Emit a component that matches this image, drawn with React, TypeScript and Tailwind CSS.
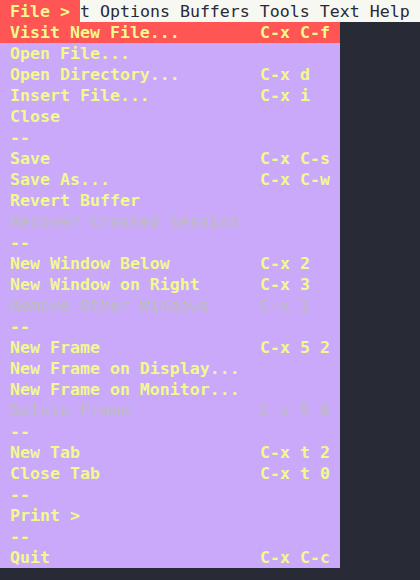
import React from "react";

type Item = { label: string; key?: string; disabled?: boolean; active?: boolean };

const items: Item[] = [
  { label: "Visit New File...", key: "C-x C-f", active: true },
  { label: "Open File..." },
  { label: "Open Directory...", key: "C-x d" },
  { label: "Insert File...", key: "C-x i" },
  { label: "Close" },
  { label: "--" },
  { label: "Save", key: "C-x C-s" },
  { label: "Save As...", key: "C-x C-w" },
  { label: "Revert Buffer" },
  { label: "Recover Crashed Session", disabled: true },
  { label: "--" },
  { label: "New Window Below", key: "C-x 2" },
  { label: "New Window on Right", key: "C-x 3" },
  { label: "Remove Other Windows", key: "C-x 1", disabled: true },
  { label: "--" },
  { label: "New Frame", key: "C-x 5 2" },
  { label: "New Frame on Display..." },
  { label: "New Frame on Monitor..." },
  { label: "Delete Frame", key: "C-x 5 0", disabled: true },
  { label: "--" },
  { label: "New Tab", key: "C-x t 2" },
  { label: "Close Tab", key: "C-x t 0" },
  { label: "--" },
  { label: "Print >" },
  { label: "--" },
  { label: "Quit", key: "C-x C-c" },
];

export default function App() {
  return (
    <div
      className="w-[420px] h-[580px] bg-[#282a36] overflow-hidden text-[16.6px]"
      style={{ fontFamily: '"DejaVu Sans Mono", monospace' }}
    >
      <div className="flex h-[22px] leading-[23px] bg-[#f8f8f2] whitespace-pre">
        <div className="w-[80px] bg-[#ff5555] pl-[10px] font-bold text-[#f1fa8c]">File &gt;</div>
        <div className="text-[#282a36]">t Options Buffers Tools Text Help</div>
      </div>
      <div className="w-[340px] bg-[#caa9fa]">
        {items.map((it, i) => (
          <div
            key={i}
            className={
              "flex h-[21px] leading-[22px] pl-[10px] whitespace-pre " +
              (it.active ? "bg-[#ff5555] " : "") +
              (it.disabled ? "text-[#bdbdbd] font-normal" : "text-[#f1fa8c] font-bold")
            }
          >
            <span className="flex-1">{it.label}</span>
            {it.key && <span className="w-[80px]">{it.key}</span>}
          </div>
        ))}
      </div>
    </div>
  );
}
